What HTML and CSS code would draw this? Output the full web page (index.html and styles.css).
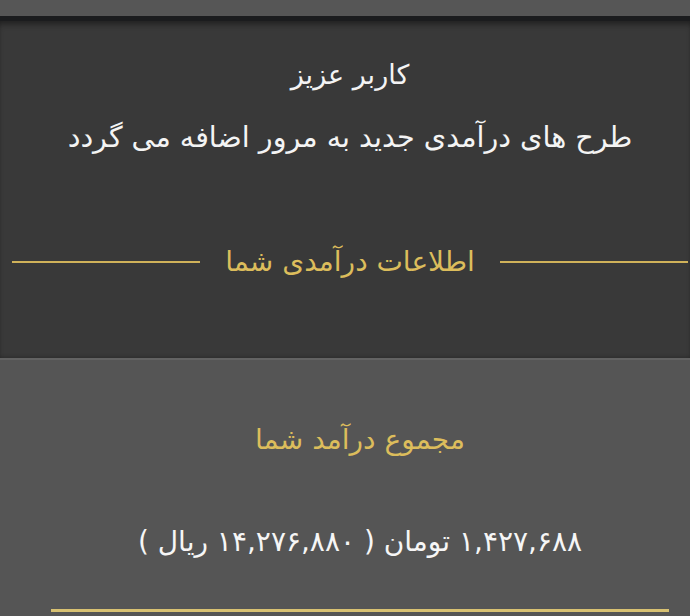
FILE: index.html
```html
<!DOCTYPE html>
<html lang="fa">
<head>
<meta charset="utf-8">
<link rel="stylesheet" href="styles.css">
</head>
<body>
<div class="topbar"></div>
<section class="panel">
  <p class="greet">کاربر عزیز</p>
  <p class="note">طرح های درآمدی جدید به مرور اضافه می گردد</p>
  <div class="divider">
    <span class="rule"></span>
    <span class="divider-text">اطلاعات درآمدی شما</span>
    <span class="rule"></span>
  </div>
</section>
<section class="summary">
  <p class="sum-title">مجموع درآمد شما</p>
  <p class="amount">۱,۴۲۷,۶۸۸ تومان ( ۱۴,۲۷۶,۸۸۰ ریال )</p>
  <div class="gold-line"></div>
</section>
</body>
</html>
```
FILE: styles.css
```css
html, body {
  margin: 0;
  padding: 0;
  width: 690px;
  height: 616px;
  overflow: hidden;
  background: #555555;
  font-family: "DejaVu Sans", "Noto Sans", sans-serif;
}

p { margin: 0; }

.topbar {
  height: 16px;
  background: #565656;
}

.panel {
  box-sizing: border-box;
  height: 342px;
  background: #393939;
  border-top: 5px solid #1b1c1e;
  box-shadow: inset 0 6px 6px -3px rgba(0,0,0,0.45), inset 0 -3px 3px -1px rgba(0,0,0,0.15);
  padding: 36px 0 0 10px;
  direction: rtl;
  text-align: center;
  color: #f4f4f4;
  font-size: 28px;
  line-height: 36px;
}

.greet {
  font-size: 27px;
}

.note {
  margin-top: 26px;
  font-size: 28.6px;
}

.divider {
  direction: ltr;
  display: flex;
  align-items: center;
  gap: 25px;
  padding: 0 2px 0 2px;
  margin-top: 89px;
}

.rule {
  flex: 1;
  height: 2px;
  background: #d0b25a;
}

.divider-text {
  direction: rtl;
  color: #dcbd5c;
}

.summary {
  height: 258px;
  border-top: 2px solid #636363;
  box-sizing: border-box;
  padding: 62px 21px 0 51px;
  direction: rtl;
  text-align: center;
  font-size: 28px;
  line-height: 36px;
}

.sum-title {
  color: #dcbd5c;
}

.amount {
  margin-top: 66px;
  color: #f6f6f6;
}

.gold-line {
  height: 3px;
  background: #d8c172;
  margin-top: 49px;
}
```
